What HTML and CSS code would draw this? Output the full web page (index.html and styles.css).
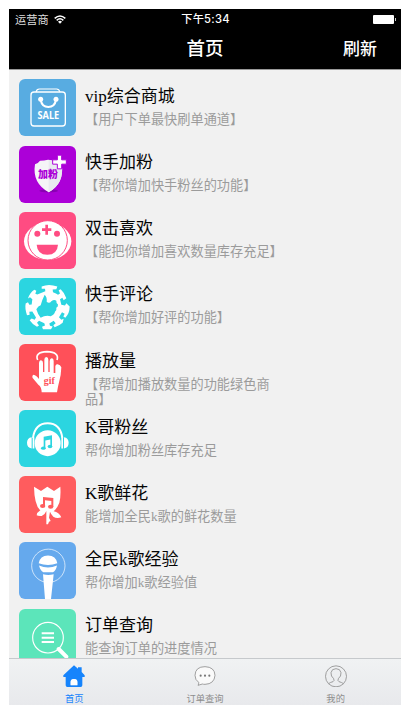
FILE: index.html
```html
<!DOCTYPE html>
<html lang="zh-CN">
<head>
<meta charset="utf-8">
<title>首页</title>
<link rel="stylesheet" href="styles.css">
</head>
<body>
<div class="phone">
  <header class="header">
    <div class="status">
      <div class="carrier">运营商
        <svg class="wifi" viewBox="0 0 36 27"><path d="M2 10Q18-4 34 10M8 16Q18 7 28 16" fill="none" stroke="#fff" stroke-width="4.5"/><path d="M12 20Q18 15 24 20L18 26z" fill="#fff"/></svg>
      </div>
      <div class="time">下午5:34</div>
      <div class="battery"><span class="cell"></span><span class="tip"></span></div>
    </div>
    <div class="nav"><span></span><h1 class="nav-title">首页</h1><span class="refresh">刷新</span></div>
  </header>

  <main class="list">
    <div class="row">
      <svg class="icon blue" viewBox="26 27 171 171"><g fill="none" stroke="#fff"><rect x="62" y="66" width="103" height="102" rx="9" stroke-width="4"/><path d="M77 66Q79 57 87 57H139Q146 57 149 66" stroke-width="3.5"/><path d="M91 90Q95 111 114 111Q133 111 137 90" stroke-width="6"/></g><circle cx="91" cy="88" r="7.5" fill="#fff"/><circle cx="137" cy="88" r="7.5" fill="#fff"/><text class="sale" x="114" y="147" textLength="65" lengthAdjust="spacingAndGlyphs">SALE</text></svg>
      <div class="body"><h2 class="title">vip综合商城</h2><p class="desc">【用户下单最快刷单通道】</p></div>
    </div>
    <div class="row">
      <svg class="icon purple" viewBox="26 225.5 171 171"><ellipse cx="115" cy="360" rx="28" ry="5" fill="#8900b3"/><path d="M74 280Q84 278 89 270Q102 270 113 267Q123 270 137 270Q143 278 154 280Q163 337 115 364Q65 336 74 280z" fill="#f5f4f7"/><path d="M115 267Q124 270 137 270Q143 278 154 280Q163 337 115 364z" fill="#e9eaf0"/><path d="M141 253H154V267H168V280H154V294H141V280H127V267H141z" fill="#fff" stroke="#ac00d8" stroke-width="3"/><text class="fans" x="113" y="323" textLength="60" lengthAdjust="spacingAndGlyphs">加粉</text></svg>
      <div class="body"><h2 class="title">快手加粉</h2><p class="desc">【帮你增加快手粉丝的功能】</p></div>
    </div>
    <div class="row">
      <svg class="icon pink" viewBox="26 19 171 171"><ellipse cx="112" cy="107" rx="71" ry="56" fill="#fff"/><circle cx="112" cy="104" r="59" fill="#fff" stroke="#ff4c82" stroke-width="3"/><path d="M79 117H143Q141 147 111 147Q81 147 79 117z"/><circle cx="81" cy="84" r="9"/><circle cx="140" cy="84" r="9"/><path d="M105 57H113V68H123V76H113V87H105V76H95V68H105z"/></svg>
      <div class="body"><h2 class="title">双击喜欢</h2><p class="desc">【能把你增加喜欢数量库存充足】</p></div>
    </div>
    <div class="row">
      <svg class="icon cyan" viewBox="26 217.5 171 171"><path fill="#fff" d="M94 243Q115 234 141 243L138 251L127 252L128 260Q138 263 143 268L149 264L145 254L151 251Q163 262 168 278L160 284L156 277L149 281L153 298L164 300L168 293L178 303Q178 323 165 337L159 333L163 325L155 320L146 335L153 343L160 340L157 352Q146 362 133 365L129 359L136 353L130 346L117 354L119 361L127 363L122 371H98L95 364L104 360L102 353L86 346L80 352L86 360L80 364Q66 356 58 344L64 339L73 343L77 336L66 318L57 319L58 328L50 329Q43 309 46 294L53 290L57 298L64 297L66 281L59 275L53 279Q59 261 72 253L78 256L75 265L81 267L105 257L104 250L94 250z"/><path d="M103 268Q111 276 109 289Q117 296 123 287Q132 281 138 286Q137 293 143 297Q144 304 138 307Q140 315 134 319Q133 327 121 332Q105 328 91 337Q82 325 78 311Q84 300 91 299Q96 282 103 268z"/></svg>
      <div class="body"><h2 class="title">快手评论</h2><p class="desc">【帮你增加好评的功能】</p></div>
    </div>
    <div class="row">
      <svg class="icon red" viewBox="26 17 171 171"><path d="M82 65Q72 42 110 40Q148 42 140 65" fill="none" stroke="#fff" stroke-width="5"/><path fill="#fff" d="M86 122V74Q87 65 92 66Q98 66 98 74V101H102V64Q102 56 108 56Q114 56 114 64V101H118V68Q119 59 125 60Q130 61 130 68V104H135V84Q136 77 142 78Q150 79 153 87L151 110L143 145L140 162H94Q94 146 84 139L67 119Q64 111 70 109Q77 110 86 122z"/><text class="gif" x="117" y="137" textLength="33" lengthAdjust="spacingAndGlyphs">gif</text></svg>
      <div class="body"><h2 class="title">播放量</h2><p class="desc">【帮增加播放数量的功能绿色商品】</p></div>
    </div>
    <div class="row">
      <svg class="icon cyan" viewBox="26 215.6 171 171"><circle cx="112" cy="315" r="39" fill="#fff"/><path d="M68 299Q74 255 112 255Q150 255 156 299" fill="none" stroke="#fff" stroke-width="6"/><path d="M64 297Q50 299 50 314Q50 329 64 331zM161 297Q175 299 175 314Q175 329 161 331z" fill="#fff"/><path d="M67 297H72V331H67zM153 297H158V331H153z" fill="#fff"/><path d="M100 296L125 291V326H120V304L105 307V331H100z"/><ellipse cx="99" cy="330" rx="7" ry="5"/><ellipse cx="119" cy="325" rx="7" ry="5"/></svg>
      <div class="body"><h2 class="title">K哥粉丝</h2><p class="desc">帮你增加粉丝库存充足</p></div>
    </div>
    <div class="row">
      <svg class="icon coral" viewBox="26 18 171 171"><path fill="#fff" d="M71 50L92 63L111 50L131 63L150 50Q152 82 147 98Q141 114 130 124Q146 127 153 142Q139 147 129 140Q122 133 119 125L116 143L121 153L116 155L113 163H108V123Q104 134 94 138Q84 139 79 136Q80 127 90 121Q72 105 71 50z"/><path d="M98 81L129 84V111H123V93L104 91V110H98z"/><ellipse cx="97" cy="108" rx="8" ry="6"/><ellipse cx="121" cy="110" rx="8" ry="6"/></svg>
      <div class="body"><h2 class="title">K歌鲜花</h2><p class="desc">能增加全民k歌的鲜花数量</p></div>
    </div>
    <div class="row">
      <svg class="icon sky" viewBox="26 216.6 171 171"><circle cx="114" cy="288" r="50" fill="none" stroke="#fff" stroke-width="2"/><path fill="#fff" d="M85 280Q89 258 113 257Q137 258 141 280Q113 291 85 280zM86 287Q113 299 140 287Q137 302 128 307H99Q90 303 86 287zM98 313Q114 318 130 313L122 388H104z"/></svg>
      <div class="body"><h2 class="title">全民k歌经验</h2><p class="desc">帮你增加k歌经验值</p></div>
    </div>
    <div class="row">
      <svg class="icon green" viewBox="56 25 171 171"><circle cx="143" cy="111" r="46" fill="none" stroke="#fff" stroke-width="3.5"/><path d="M124 98H161M124 111H161M124 124H161" stroke="#fff" stroke-width="6"/><path d="M175 145L198 168" stroke="#fff" stroke-width="12" stroke-linecap="round"/></svg>
      <div class="body"><h2 class="title">订单查询</h2><p class="desc">能查询订单的进度情况</p></div>
    </div>
  </main>

  <footer class="tabs">
    <div class="tab active"><svg class="tab-icon" viewBox="0 0 66 66"><path d="M33 1L45 11V7H56V21L65 31V36H58V61Q58 66 53 66H43V50Q43 42 33 42Q23 42 23 50V66H13Q8 66 8 61V36H1V31z" fill="#1684fc"/><path d="M23 61V51Q23 42 33 42Q43 42 43 51V61z" fill="#fff"/><path d="M20 61H46V66H20z" fill="#1684fc"/></svg><span>首页</span></div>
    <div class="tab"><svg class="tab-icon" viewBox="0 0 66 66"><path d="M14 52Q3 45 3 31Q4 5 33 5Q62 6 63 31Q61 57 33 58Q28 58 25 57L12 61Q15 57 14 52z" fill="#fafafa" stroke="#8e8e8e" stroke-width="2.5"/><g fill="#777"><circle cx="20" cy="32" r="3.2"/><circle cx="33" cy="32" r="3.2"/><circle cx="46" cy="32" r="3.2"/></g></svg><span>订单查询</span></div>
    <div class="tab"><svg class="tab-icon" viewBox="0 0 66 66"><g fill="none" stroke="#8e8e8e" stroke-width="2.5"><circle cx="33" cy="34" r="31.5"/><path d="M11 56Q15 52 24 50Q29 48 26 41Q17 34 18 23Q20 11 33 11Q46 11 48 23Q49 34 40 41Q37 48 42 50Q51 52 55 56"/></g></svg><span>我的</span></div>
  </footer>
</div>
</body>
</html>
```
FILE: styles.css
```css
* { box-sizing: border-box; }
body {
  margin: 0;
  padding: 9px;
  height: 712px;
  overflow: hidden;
  background: #fff;
  font-family: "Liberation Serif", "Noto Sans CJK SC", sans-serif;
}
.phone {
  width: 392px;
  height: 696px;
  display: flex;
  flex-direction: column;
  background: #f1f1f1;
  overflow: hidden;
}
.header {
  flex: none;
  height: 61px;
  background: #000;
  border-bottom: 1px solid #999;
  color: #fff;
  font-family: "Noto Sans CJK SC", sans-serif;
}
.status {
  height: 20px;
  display: grid;
  grid-template-columns: 1fr auto 1fr;
  align-items: center;
  padding: 0 5px 0 6px;
  font-size: 11.2px;
  line-height: 20px;
}
.carrier { display: flex; align-items: center; gap: 5px; color: #ddd; }
.wifi { width: 12px; height: 9px; }
.time { font-family: Inter, "Noto Sans CJK SC", sans-serif; font-weight: 500; font-size: 11.2px; letter-spacing: 0.25px; }
.battery { display: flex; justify-content: flex-end; align-items: center; gap: 1px; }
.cell { width: 21px; height: 9px; background: #fff; border-radius: 1px; }
.tip { width: 1px; height: 3px; background: #ccc; }
.nav {
  display: grid;
  grid-template-columns: 1fr auto 1fr;
  align-items: center;
  height: 38px;
  padding-right: 24px;
  padding-left: 24px;
}
.nav-title { margin: 0; font-size: 18.5px; font-weight: 500; line-height: 36px; height: 38px; }
.refresh { text-align: right; font-size: 17px; font-weight: 500; line-height: 38px; }
.list { flex: 1; min-height: 0; overflow: hidden; padding: 9.4px 0 0 9.5px; }
.row { display: flex; gap: 9.5px; height: 66.17px; }
.icon { flex: none; width: 57px; height: 57px; border-radius: 6px; }
.blue { background: #58ace1; fill: #58ace1; }
.purple { background: #ac00d8; fill: #ac00d8; }
.pink { background: #ff4c82; fill: #ff4c82; }
.cyan { background: #2bd5e0; fill: #2bd5e0; }
.red { background: #ff5059; fill: #ff5059; }
.coral { background: #ff5c5e; fill: #ff5c5e; }
.sky { background: #65a9ed; fill: #65a9ed; }
.green { background: #5ce5ba; fill: #5ce5ba; }
.sale, .fans, .gif { text-anchor: middle; font-weight: 700; }
.sale { font: 700 31px "Noto Sans", sans-serif; fill: #fff; }
.fans { font-family: "Noto Sans CJK SC", sans-serif; font-size: 31px; font-weight: 900; }
.gif { font-family: "Liberation Serif", serif; font-size: 28px; }
.body { width: 198px; padding-top: 5.6px; }
.title { margin: 0; font-size: 17px; font-weight: 400; line-height: 24px; color: #050505; white-space: nowrap; }
.desc { margin: 3px 0 0; font-size: 13.2px; line-height: 15px; color: #9b9b9b; }
.tabs {
  flex: none;
  height: 47px;
  display: grid;
  grid-template-columns: repeat(3, 1fr);
  border-top: 1px solid #c6c9cc;
  background: linear-gradient(#f0f2f3, #e8e9ec);
}
.tab {
  display: flex;
  flex-direction: column;
  align-items: center;
  padding-top: 6px;
  font-family: "Noto Sans CJK SC", sans-serif;
  font-size: 9.3px;
  line-height: 14px;
  gap: 4px;
  color: #8e8e8e;
}
.active { color: #1684fc; }
.tab-icon { width: 22px; height: 22px; }
```
